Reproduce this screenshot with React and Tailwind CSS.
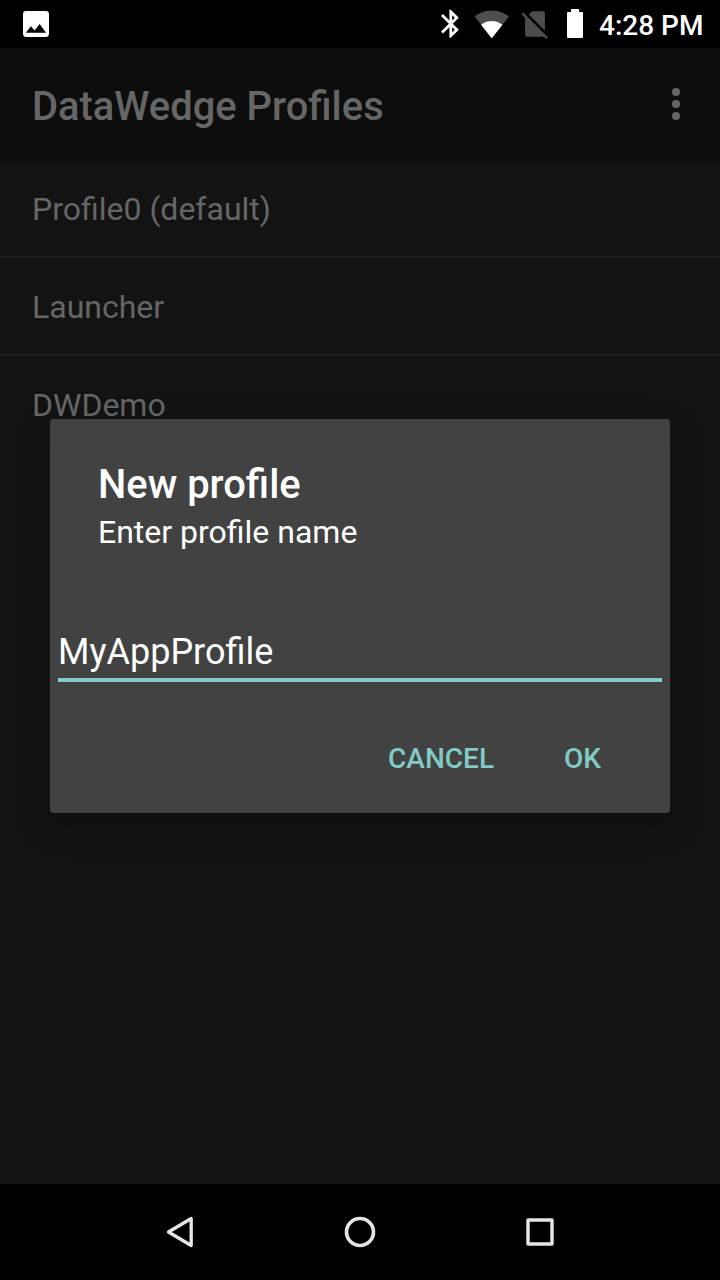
const profiles = ["Profile0 (default)", "Launcher", "DWDemo"];

function StatusBar() {
  return (
    <header className="flex h-12 items-center bg-black text-white">
      <svg className="ml-[18px] size-9" viewBox="-0.46 -0.46 24.92 24.92" fill="currentColor">
        <path d="M21 19V5c0-1.1-.9-2-2-2H5c-1.1 0-2 .9-2 2v14c0 1.1.9 2 2 2h14c1.1 0 2-.9 2-2zM8.5 13.5l2.5 3.01L14.5 12l4.5 6H5l3.5-4.5z" />
      </svg>
      <div className="ml-auto flex items-center pr-4">
        <svg className="size-[33.6px]" viewBox="0 0 24 24" fill="currentColor">
          <path d="M17.71 7.71L12 2h-1v7.59L6.41 5 5 6.41 10.59 12 5 17.59 6.41 19 11 14.41V22h1l5.71-5.71-4.3-4.29 4.3-4.29zM13 5.83l1.88 1.88L13 9.59V5.83zm1.88 10.46L13 18.17v-3.76l1.88 1.88z" />
        </svg>
        <svg className="mb-px ml-[6.2px] h-9 w-[35.5px]" viewBox="0 0 24 24" preserveAspectRatio="none">
          <path fill="#4d4d4d" d="M12.01 21.49L23.64 7c-.45-.34-4.93-4-11.64-4C5.28 3 .81 6.66.36 7l11.63 14.49.01.01.01-.01z" />
          <path fill="#fff" d="M4.79 12.52l7.2 8.98H12l.01-.01 7.2-8.98C18.85 12.24 16.1 10 12 10s-6.85 2.24-7.21 2.52z" />
        </svg>
        <svg className="ml-[9px] size-[34px]" viewBox="0 0 24 24" fill="#4d4d4d">
          <path d="M18.99 4c0-.6-.4-1-.99-1h-8L7.66 5.34 19 16.68 18.99 4zM3.65 3.88L2.38 5.15 5 7.77V20c0 .6.4 1 1 1h12.23l1.61 1.62 1.27-1.27L3.65 3.88z" />
        </svg>
        <svg className="ml-[14.7px] h-[30px] w-4" viewBox="0 0 16 30" fill="currentColor">
          <path d="M4 0h8v3h3q1 0 1 1v24q0 1-1 1H1q-1 0-1-1V4q0-1 1-1h3z" />
        </svg>
        <span className="ml-4 w-[105px] pt-[3px] text-[28px] leading-8 font-medium whitespace-nowrap">4:28 PM</span>
      </div>
    </header>
  );
}

function AppBar() {
  return (
    <div className="relative flex h-28 items-center justify-between bg-[#0d0d0d] pr-10 pl-8 text-[#666] shadow-[0_1px_7px_rgba(0,0,0,0.4)]">
      <h1 className="pt-1.5 text-[39.9px] leading-12 font-medium">DataWedge Profiles</h1>
      <button className="flex flex-col gap-1" aria-label="More options">
        <span className="size-2 rounded-full bg-[#666]" />
        <span className="size-2 rounded-full bg-[#666]" />
        <span className="size-2 rounded-full bg-[#666]" />
      </button>
    </div>
  );
}

function ProfileDialog() {
  return (
    <section className="absolute top-[419px] left-[50px] flex h-[394px] w-[620px] flex-col rounded-[4px] bg-[#424242] text-white shadow-[0_12px_32px_rgba(0,0,0,0.28)]">
      <div className="px-12 pt-[42px]">
        <h2 className="text-[39.9px] leading-[47px] font-medium">New profile</h2>
        <p className="pt-[5px] text-[32px] leading-[38px]">Enter profile name</p>
      </div>
      <div className="mx-2 mt-[80px] h-[51px] border-b-4 border-[#80cbc4] text-[36px] leading-[42px]">MyAppProfile</div>
      <div className="mt-[61px] flex justify-end pr-[69px] text-[28px] leading-8 font-medium text-[#80cbc4]">
        <button className="mr-[70px]">CANCEL</button>
        <button>OK</button>
      </div>
    </section>
  );
}

function NavigationBar() {
  return (
    <nav className="flex h-24 items-center justify-center gap-[132px] bg-black" aria-label="System navigation">
      <svg className="size-12" viewBox="0 0 48 48" fill="none" stroke="#e6e6e6" strokeWidth="3.3" strokeLinejoin="round">
        <path d="M12.5 24L35.2 10.5v27z" />
      </svg>
      <svg className="size-12" viewBox="0 0 48 48" fill="none" stroke="#e6e6e6" strokeWidth="3.6">
        <circle cx="24" cy="24" r="13.5" />
      </svg>
      <svg className="size-12" viewBox="0 0 48 48" fill="none" stroke="#e6e6e6" strokeWidth="3.4" strokeLinejoin="round">
        <path d="M12 12h24v24H12z" />
      </svg>
    </nav>
  );
}

export default function App() {
  return (
    <div className="relative flex h-[1280px] w-[720px] flex-col overflow-hidden bg-[#131313] font-[Roboto,sans-serif]">
      <StatusBar />
      <AppBar />
      <ul className="flex-1 text-[32px] leading-[38px] text-[#666]">
        {profiles.map((name) => (
          <li key={name} className="flex h-[98px] items-center border-b-2 border-[#1e1e1e] pt-0.5 pl-8 last:border-transparent">
            {name}
          </li>
        ))}
      </ul>
      <NavigationBar />
      <ProfileDialog />
    </div>
  );
}
